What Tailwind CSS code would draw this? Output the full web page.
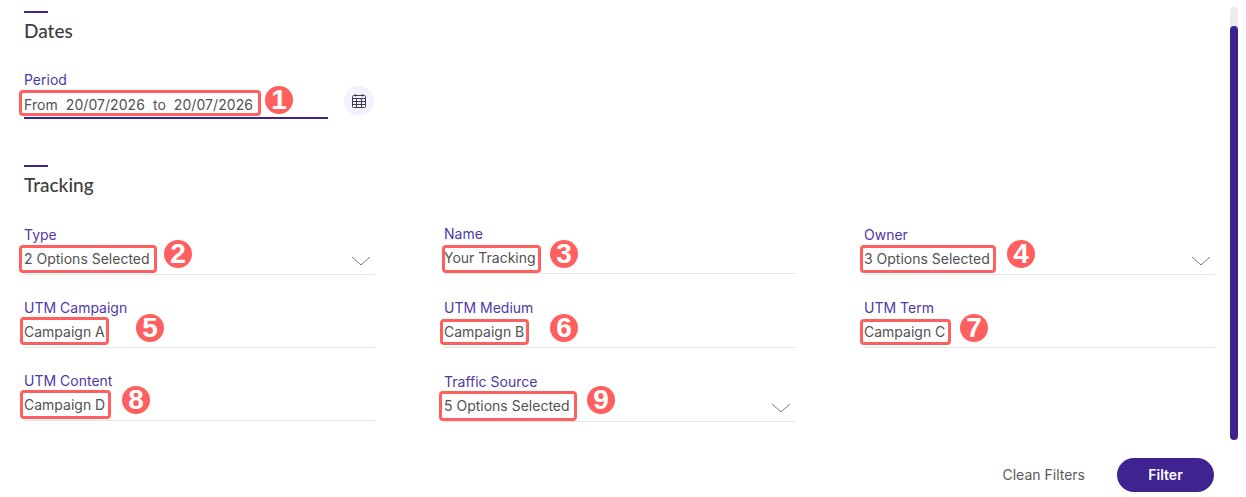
<!DOCTYPE html>
<html lang="en">
<head>
  <meta charset="UTF-8">
  <title>Filters</title>
  <script src="https://cdn.jsdelivr.net/npm/@tailwindcss/browser@4"></script>
</head>
<body class="bg-white font-['Inter',sans-serif] text-sm text-[#525252]">
  <div class="relative h-[497px] w-[1246px] overflow-hidden">
    <!-- Scrollbar -->
    <div class="absolute left-[1230px] top-[7px] h-[433px] w-2 rounded-full bg-[#ececec]">
      <div class="mt-[19px] h-[414px] w-2 rounded-full bg-[#3f2390]"></div>
    </div>

    <div class="w-[1215px] pl-6 pt-[11px]">
      <!-- Dates -->
      <div class="h-0.5 w-6 bg-[#3f2390]"></div>
      <h2 class="mt-[6px] h-6 font-['Lato',sans-serif] text-[19px] font-medium leading-6 text-[#3d3d3d]">Dates</h2>
      <div class="mt-[28px] flex items-start">
        <div class="w-[304px] border-b-2 border-[#3f2390]">
          <div class="h-[18px] leading-[18px] text-[#5038a6]">Period</div>
          <div class="mt-[5px] h-[23px] whitespace-pre leading-[22px] tracking-[0.06px]">From  20/07/2026  to  20/07/2026</div>
        </div>
        <button class="ml-4 mt-[15px] flex h-[30px] w-[30px] items-center justify-center rounded-full bg-[#f3f1fd]">
          <svg class="h-[16px] w-[16px]" viewBox="0 0 16 16" fill="none" stroke="#3d3a4d" stroke-width="1">
            <rect x="1.5" y="2.5" width="13" height="12" rx="1" />
            <path d="M4.5 1v2.5M11.5 1v2.5M1.5 5.5h13M1.5 8.5h13M1.5 11.5h13M5.5 5.5v9M10.5 5.5v9" />
          </svg>
        </button>
      </div>

      <!-- Tracking -->
      <div class="mt-[46px] h-0.5 w-6 bg-[#3f2390]"></div>
      <h2 class="mt-[6px] h-6 font-['Lato',sans-serif] text-[19px] font-medium leading-6 text-[#3d3d3d]">Tracking</h2>

      <div class="mt-[29px] grid grid-cols-[351px_351px_351px] items-start gap-x-[69px] gap-y-[24px]">
        <div class="flex h-[49px] flex-col border-b border-[#e5e5e5]">
          <div class="h-[18px] leading-[18px] text-[#5038a6]">Type</div>
          <div class="mt-[4px] flex items-center justify-between pr-[4px] leading-[22px]">
            <span>2 Options Selected</span>
            <svg class="mt-1 h-[10px] w-[20px]" viewBox="0 0 20 10" fill="none" stroke="#777" stroke-width="1"><path d="M1 1l9 8 9-8" /></svg>
          </div>
        </div>
        <div class="-mt-px flex h-[49px] flex-col border-b border-[#e5e5e5]">
          <div class="h-[18px] leading-[18px] text-[#5038a6]">Name</div>
          <div class="mt-[4px] leading-[22px]">Your Tracking</div>
        </div>
        <div class="flex h-[49px] flex-col border-b border-[#e5e5e5]">
          <div class="h-[18px] leading-[18px] text-[#5038a6]">Owner</div>
          <div class="mt-[4px] flex items-center justify-between pr-[4px] leading-[22px]">
            <span>3 Options Selected</span>
            <svg class="mt-1 h-[10px] w-[20px]" viewBox="0 0 20 10" fill="none" stroke="#777" stroke-width="1"><path d="M1 1l9 8 9-8" /></svg>
          </div>
        </div>

        <div class="flex h-[49px] flex-col border-b border-[#e5e5e5]">
          <div class="h-[18px] leading-[18px] text-[#5038a6]">UTM Campaign</div>
          <div class="mt-[4px] leading-[22px]">Campaign A</div>
        </div>
        <div class="flex h-[49px] flex-col border-b border-[#e5e5e5]">
          <div class="h-[18px] leading-[18px] text-[#5038a6]">UTM Medium</div>
          <div class="mt-[4px] leading-[22px]">Campaign B</div>
        </div>
        <div class="flex h-[49px] flex-col border-b border-[#e5e5e5]">
          <div class="h-[18px] leading-[18px] text-[#5038a6]">UTM Term</div>
          <div class="mt-[4px] leading-[22px]">Campaign C</div>
        </div>

        <div class="flex h-[49px] flex-col border-b border-[#e5e5e5]">
          <div class="h-[18px] leading-[18px] text-[#5038a6]">UTM Content</div>
          <div class="mt-[4px] leading-[22px]">Campaign D</div>
        </div>
        <div class="mt-px flex h-[49px] flex-col border-b border-[#e5e5e5]">
          <div class="h-[18px] leading-[18px] text-[#5038a6]">Traffic Source</div>
          <div class="mt-[4px] flex items-center justify-between pr-[4px] leading-[22px]">
            <span>5 Options Selected</span>
            <svg class="mt-1 h-[10px] w-[20px]" viewBox="0 0 20 10" fill="none" stroke="#777" stroke-width="1"><path d="M1 1l9 8 9-8" /></svg>
          </div>
        </div>
      </div>

      <!-- Actions -->
      <div class="mt-[36px] mr-px flex items-center justify-end">
        <button class="mr-[32px] text-[#5a5a5a]">Clean Filters</button>
        <button class="h-[34px] w-[97px] rounded-full bg-[#3f2390] font-semibold text-white">Filter</button>
      </div>
    </div>

    <!-- Annotation boxes -->
    <div class="absolute left-[19px] top-[90px] h-[26px] w-[242px] rounded-sm border-[3px] border-[#ff5f5f]"></div>
    <div class="absolute left-[19px] top-[245px] h-[28px] w-[138px] rounded-sm border-[3px] border-[#ff5f5f]"></div>
    <div class="absolute left-[442px] top-[245px] h-[28px] w-[99px] rounded-sm border-[3px] border-[#ff5f5f]"></div>
    <div class="absolute left-[860px] top-[245px] h-[28px] w-[136px] rounded-sm border-[3px] border-[#ff5f5f]"></div>
    <div class="absolute left-[20px] top-[317px] h-[28px] w-[89px] rounded-sm border-[3px] border-[#ff5f5f]"></div>
    <div class="absolute left-[440px] top-[319px] h-[26px] w-[89px] rounded-sm border-[3px] border-[#ff5f5f]"></div>
    <div class="absolute left-[860px] top-[319px] h-[26px] w-[91px] rounded-sm border-[3px] border-[#ff5f5f]"></div>
    <div class="absolute left-[20px] top-[390px] h-[29px] w-[91px] rounded-sm border-[3px] border-[#ff5f5f]"></div>
    <div class="absolute left-[439px] top-[391px] h-[30px] w-[138px] rounded-sm border-[3px] border-[#ff5f5f]"></div>

    <!-- Annotation numbers -->
    <div class="absolute left-[265px] top-[86px] flex h-7 w-7 items-center justify-center rounded-full bg-[#ff5f5f] font-['Liberation_Sans',sans-serif] text-[28px] font-bold leading-none text-white">1</div>
    <div class="absolute left-[164px] top-[240px] flex h-7 w-7 items-center justify-center rounded-full bg-[#ff5f5f] font-['Liberation_Sans',sans-serif] text-[28px] font-bold leading-none text-white">2</div>
    <div class="absolute left-[550px] top-[240px] flex h-7 w-7 items-center justify-center rounded-full bg-[#ff5f5f] font-['Liberation_Sans',sans-serif] text-[28px] font-bold leading-none text-white">3</div>
    <div class="absolute left-[1007px] top-[240px] flex h-7 w-7 items-center justify-center rounded-full bg-[#ff5f5f] font-['Liberation_Sans',sans-serif] text-[28px] font-bold leading-none text-white">4</div>
    <div class="absolute left-[136px] top-[314px] flex h-7 w-7 items-center justify-center rounded-full bg-[#ff5f5f] font-['Liberation_Sans',sans-serif] text-[28px] font-bold leading-none text-white">5</div>
    <div class="absolute left-[550px] top-[314px] flex h-7 w-7 items-center justify-center rounded-full bg-[#ff5f5f] font-['Liberation_Sans',sans-serif] text-[28px] font-bold leading-none text-white">6</div>
    <div class="absolute left-[960px] top-[314px] flex h-7 w-7 items-center justify-center rounded-full bg-[#ff5f5f] font-['Liberation_Sans',sans-serif] text-[28px] font-bold leading-none text-white">7</div>
    <div class="absolute left-[122px] top-[386px] flex h-7 w-7 items-center justify-center rounded-full bg-[#ff5f5f] font-['Liberation_Sans',sans-serif] text-[28px] font-bold leading-none text-white">8</div>
    <div class="absolute left-[587px] top-[386px] flex h-7 w-7 items-center justify-center rounded-full bg-[#ff5f5f] font-['Liberation_Sans',sans-serif] text-[28px] font-bold leading-none text-white">9</div>
  </div>
</body>
</html>
